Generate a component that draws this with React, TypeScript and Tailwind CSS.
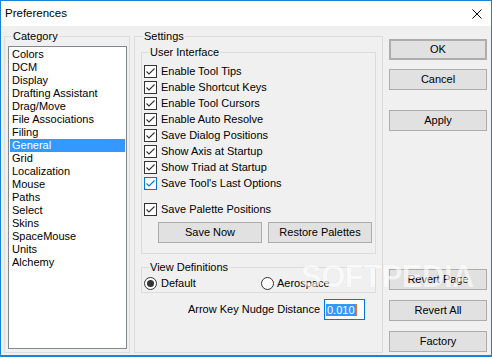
import React from "react";

const categories = [
  "Colors",
  "DCM",
  "Display",
  "Drafting Assistant",
  "Drag/Move",
  "File Associations",
  "Filing",
  "General",
  "Grid",
  "Localization",
  "Mouse",
  "Paths",
  "Select",
  "Skins",
  "SpaceMouse",
  "Units",
  "Alchemy",
];

const checks = [
  "Enable Tool Tips",
  "Enable Shortcut Keys",
  "Enable Tool Cursors",
  "Enable Auto Resolve",
  "Save Dialog Positions",
  "Show Axis at Startup",
  "Show Triad at Startup",
  "Save Tool's Last Options",
];

function CheckBox({ hover = false }: { hover?: boolean }) {
  const c = hover ? "#0078d7" : "#333333";
  return (
    <svg width="13" height="13" viewBox="0 0 13 13" className="shrink-0">
      <rect x="0.5" y="0.5" width="12" height="12" fill="#ffffff" stroke={c} strokeWidth="1" />
      <path d="M2.5 6.5 L5 9 L10.5 3.5" fill="none" stroke={c} strokeWidth="1.1" />
    </svg>
  );
}

function Radio({ on = false }: { on?: boolean }) {
  return (
    <svg width="13" height="13" viewBox="0 0 13 13" className="shrink-0">
      <circle cx="6.5" cy="6.5" r="6" fill="#ffffff" stroke="#333333" strokeWidth="1" />
      {on && <circle cx="6.5" cy="6.5" r="3.5" fill="#333333" />}
    </svg>
  );
}

function Btn({ children, cls = "" }: { children: React.ReactNode; cls?: string }) {
  return (
    <div
      className={
        "h-[21px] bg-[#e1e1e1] border border-[#adadad] flex items-center justify-center " + cls
      }
    >
      {children}
    </div>
  );
}

export default function App() {
  return (
    <div className="relative w-[492px] h-[357px] overflow-hidden border-x border-t border-b-2 border-[#1883d7] bg-[#f0f0f0] flex flex-col font-[family-name:'Liberation_Sans',Arial,sans-serif] text-[11px] text-black">
      <div className="h-[25px] shrink-0 bg-white flex items-center justify-between pl-[4px] pr-[9px]">
        <span className="text-[11.5px]">Preferences</span>
        <svg width="10" height="10" viewBox="0 0 10 10">
          <path d="M0.5 0.5 L9.5 9.5 M9.5 0.5 L0.5 9.5" stroke="#000" strokeWidth="1" />
        </svg>
      </div>

      <div className="flex flex-1 pt-[3px] pb-[2px] pl-[3px]">
        <fieldset className="m-0 w-[126px] h-[324px] shrink-0 border border-[#dcdcdc] pl-[3px] pr-[2px] pb-[3px]">
          <legend className="ml-[4px] px-[1px] leading-[14px]">Category</legend>
          <div className="mt-[3px] h-[303px] border border-[#828790] bg-white pt-[1px] px-[1px]">
            {categories.map((c) => (
              <div
                key={c}
                className={
                  "h-[13px] leading-[13px] pl-[2px] whitespace-nowrap " +
                  (c === "General" ? "bg-[#3399ff] text-white" : "")
                }
              >
                {c}
              </div>
            ))}
          </div>
        </fieldset>

        <fieldset className="m-0 ml-[4px] w-[249px] h-[324px] shrink-0 border border-[#dcdcdc] px-[6px]">
          <legend className="ml-[2px] px-[1px] leading-[14px]">Settings</legend>

          <fieldset className="m-0 mt-[2px] border border-[#dcdcdc] pl-[2px] pt-[5px] pb-[10px]">
            <legend className="ml-[5px] px-[1px] leading-[14px]">User Interface</legend>
            {checks.map((c, i) => (
              <div key={c} className="h-[16px] flex items-start">
                <div className="mt-[1px]">
                  <CheckBox hover={i === 7} />
                </div>
                <span className="ml-[4px] leading-[15px]">{c}</span>
              </div>
            ))}
            <div className="mt-[10px] h-[16px] flex items-start">
              <div className="mt-[1px]">
                <CheckBox />
              </div>
              <span className="ml-[4px] leading-[15px]">Save Palette Positions</span>
            </div>
            <div className="mt-[4px] ml-[14px] flex gap-[6px]">
              <Btn cls="w-[104px]">Save Now</Btn>
              <Btn cls="w-[104px]">Restore Palettes</Btn>
            </div>
          </fieldset>

          <fieldset className="m-0 mt-[6px] border border-[#dcdcdc] pl-[2px] pt-[1px] pb-[1px]">
            <legend className="ml-[5px] px-[1px] leading-[14px]">View Definitions</legend>
            <div className="h-[16px] flex items-center">
              <div className="w-[117px] flex items-center">
                <Radio on />
                <span className="ml-[4px]">Default</span>
              </div>
              <div className="flex items-center">
                <Radio />
                <span className="ml-[3px]">Aerospace</span>
              </div>
            </div>
          </fieldset>

          <div className="mt-[6px] h-[21px] flex items-center justify-end pr-[11px]">
            <span>Arrow Key Nudge Distance</span>
            <div className="ml-[4px] w-[41px] h-[21px] border border-[#0078d7] bg-white flex items-center pl-[1px]">
              <span className="bg-[#3399ff] text-white leading-[12px] px-[1px]">0.010</span>
              <span className="w-[1px] h-[12px] bg-[#e07a2e]" />
            </div>
          </div>
        </fieldset>

        <div className="ml-[6px] w-[98px] shrink-0 flex flex-col pt-[10px] pb-[1px]">
          <Btn cls="border-2 border-[#0078d7]">OK</Btn>
          <Btn cls="mt-[9px]">Cancel</Btn>
          <Btn cls="mt-[20px]">Apply</Btn>
          <div className="flex-1" />
          <Btn>Revert Page</Btn>
          <Btn cls="mt-[10px]">Revert All</Btn>
          <Btn cls="mt-[10px]">Factory</Btn>
        </div>
      </div>

      <div
        aria-hidden="true"
        className="pointer-events-none select-none absolute left-[300px] top-[259px] text-[31px] font-bold leading-[34px] tracking-[-0.5px] text-white opacity-60 [text-shadow:0_0_1px_rgba(0,0,0,0.12)]"
      >
        SOFTPEDIA<span className="absolute -right-[8px] top-[2px] text-[9px] leading-[9px]">®</span>
      </div>
    </div>
  );
}
